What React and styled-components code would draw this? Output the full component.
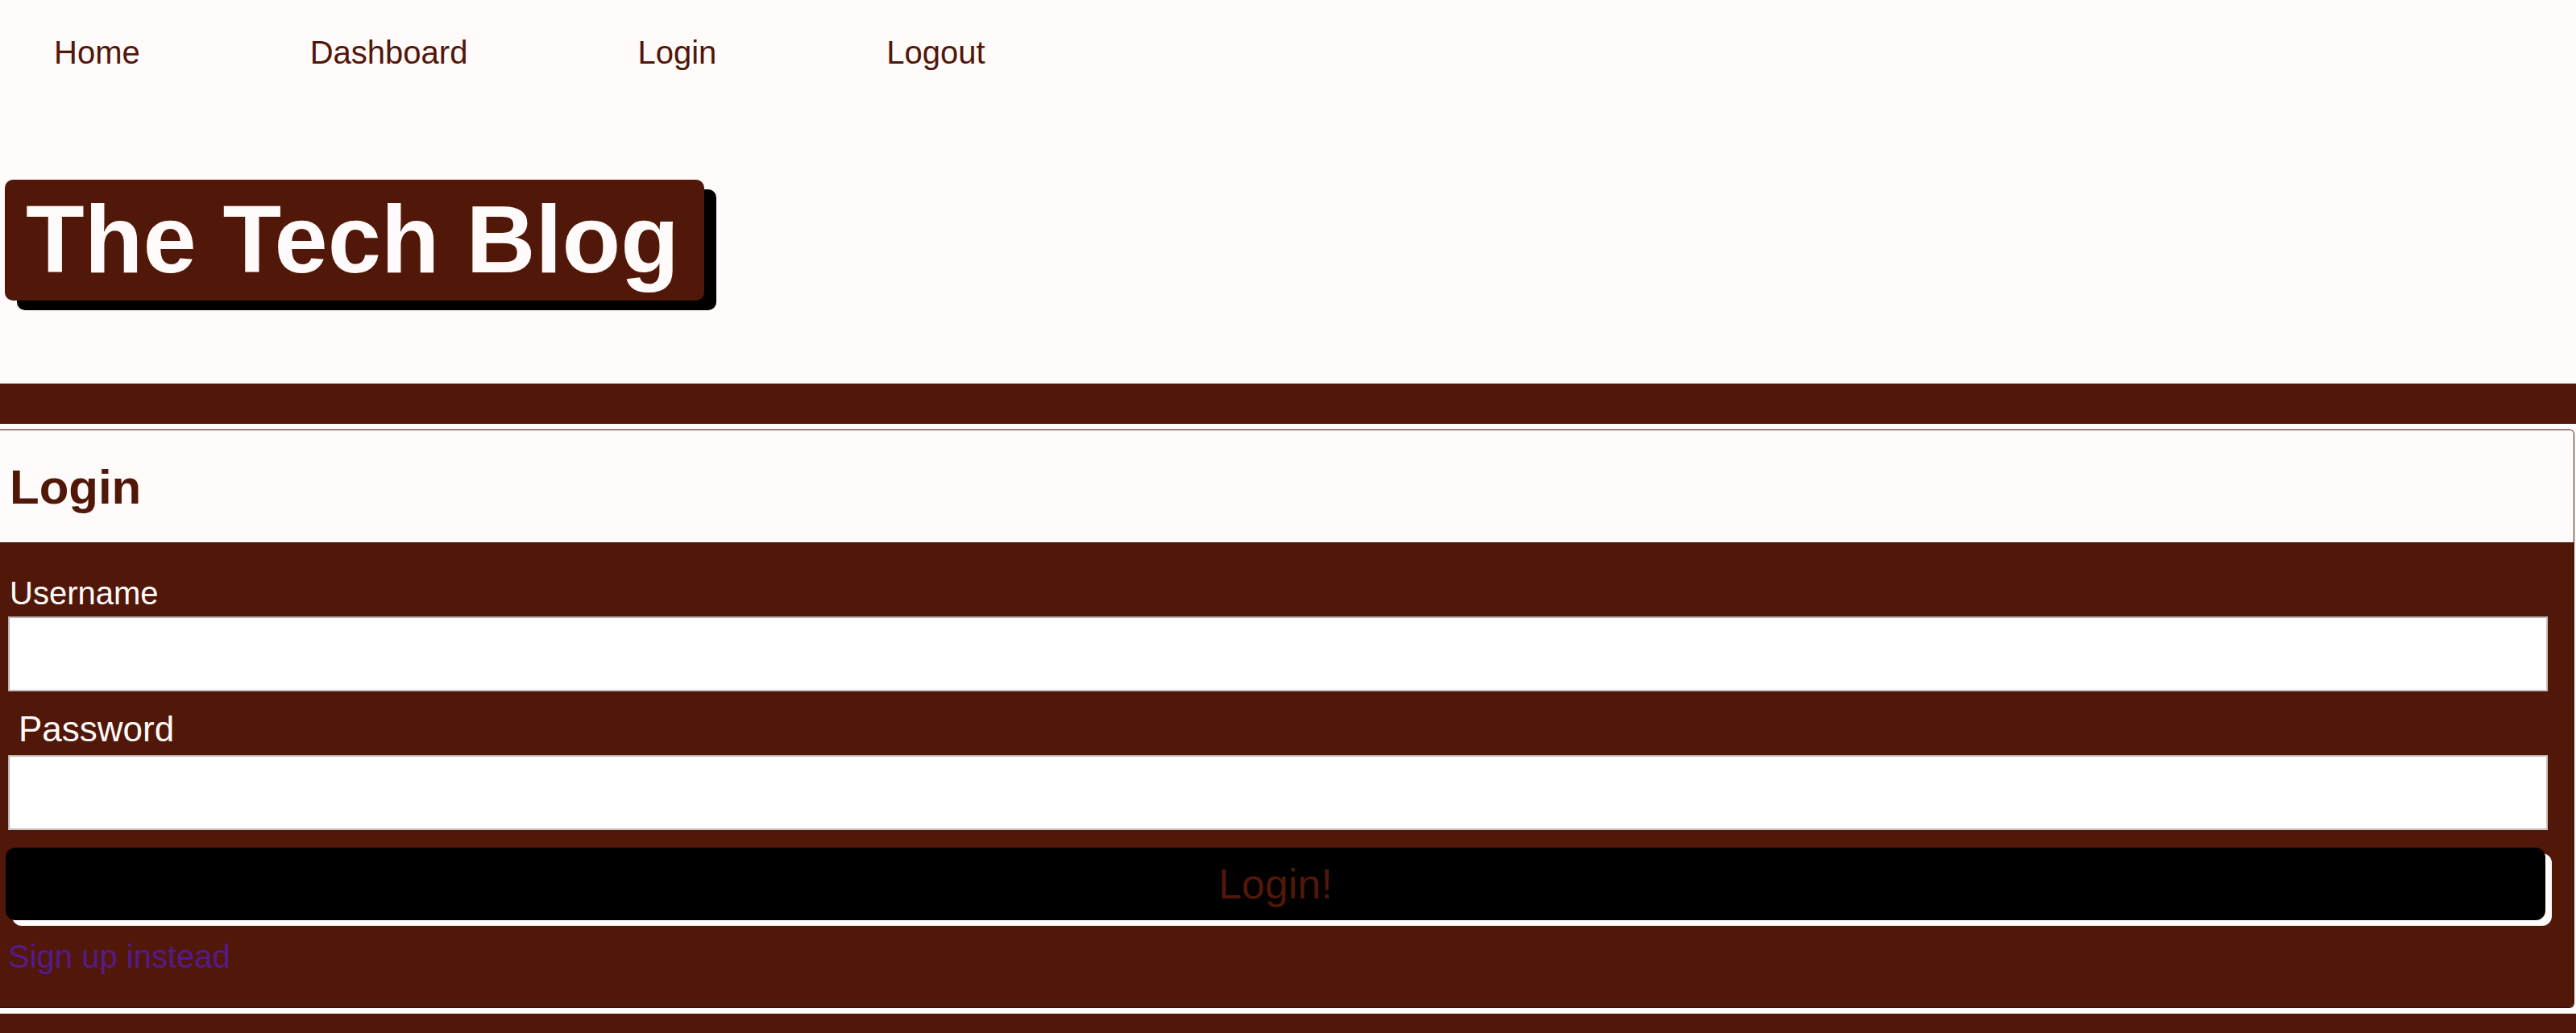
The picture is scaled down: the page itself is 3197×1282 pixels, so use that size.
import React from "react";
import styled, { createGlobalStyle } from "styled-components";

const brown = "#511708";
const cream = "#fffbfa";

const GlobalStyle = createGlobalStyle`
  html, body {
    margin: 0;
    padding: 0;
    background: ${cream};
    font-family: "Liberation Sans", Arial, sans-serif;
  }
  * {
    box-sizing: border-box;
  }
`;

const Page = styled.div`
  display: flex;
  flex-direction: column;
  min-height: 1282px;
`;

const Header = styled.header`
  display: flex;
  flex-direction: column;
  align-items: flex-start;
`;

const Nav = styled.nav`
  display: flex;
  gap: 211px;
  padding: 43px 0 0 67px;
`;

const NavLink = styled.a`
  font-size: 40px;
  line-height: 45px;
  color: ${brown};
  text-decoration: none;
`;

const Title = styled.h1`
  margin: 135px 0 0 6px;
  padding: 8px 31px 10px 26px;
  height: 150px;
  background: ${brown};
  color: ${cream};
  font-size: 119px;
  font-weight: 700;
  line-height: 132px;
  border-radius: 10px;
  box-shadow: 15px 12px 0 #000;
`;

const Band = styled.div`
  margin-top: 103px;
  height: 50px;
  background: ${brown};
`;

const Card = styled.section`
  margin-top: 7px;
  width: calc(100% - 2px);
  border: 1px solid #3a1006;
  border-left-width: 0;
  border-radius: 0 6px 6px 0;
  overflow: hidden;
`;

const CardHeader = styled.div`
  height: 139px;
  background: ${cream};
  padding: 37px 0 0 12px;
`;

const CardTitle = styled.h2`
  margin: 0;
  font-size: 60px;
  font-weight: 700;
  line-height: 68px;
  color: ${brown};
`;

const Form = styled.form`
  display: flex;
  flex-direction: column;
  align-items: flex-start;
  background: ${brown};
  padding: 40px 0 40px 0;
`;

const Label = styled.label`
  display: block;
  color: ${cream};
  font-size: ${({ $size }) => $size}px;
  line-height: ${({ $line }) => $line}px;
  padding-left: ${({ $indent }) => $indent}px;
  margin-top: ${({ $top }) => $top || 0}px;
`;

const Input = styled.input`
  margin: ${({ $top }) => $top || 6}px 0 0 10px;
  width: 3152px;
  height: 93px;
  background: #fff;
  border: 2px solid #c9c4c2;
  border-top-color: #b9b2b0;
  border-left-color: #b9b2b0;
  outline: none;
  font-size: 36px;
  font-family: inherit;
`;

const Button = styled.button`
  margin: 22px 0 0 7px;
  width: 3152px;
  height: 90px;
  background: #000;
  color: ${brown};
  border: none;
  border-radius: 12px;
  box-shadow: 8px 7px 0 ${cream};
  font-family: inherit;
  font-size: 52px;
  cursor: pointer;
`;

const SignUp = styled.a`
  margin: 22px 0 0 10px;
  font-size: 40px;
  line-height: 46px;
  color: #551a8b;
  text-decoration: none;
`;

const Footer = styled.footer`
  flex: 1;
  margin-top: 7px;
  background: ${brown};
`;

export default function App() {
  return (
    <>
      <GlobalStyle />
      <Page>
        <Header>
          <Nav>
            <NavLink href="#">Home</NavLink>
            <NavLink href="#">Dashboard</NavLink>
            <NavLink href="#">Login</NavLink>
            <NavLink href="#">Logout</NavLink>
          </Nav>
          <Title>The Tech Blog</Title>
        </Header>
        <Band />
        <Card>
          <CardHeader>
            <CardTitle>Login</CardTitle>
          </CardHeader>
          <Form onSubmit={(e) => e.preventDefault()}>
            <Label $size={40} $line={46} $indent={12}>
              Username
            </Label>
            <Input type="text" />
            <Label $size={44} $line={51} $indent={23} $top={21}>
              Password
            </Label>
            <Input type="password" $top={7} />
            <Button type="submit">Login!</Button>
            <SignUp href="#">Sign up instead</SignUp>
          </Form>
        </Card>
        <Footer />
      </Page>
    </>
  );
}
